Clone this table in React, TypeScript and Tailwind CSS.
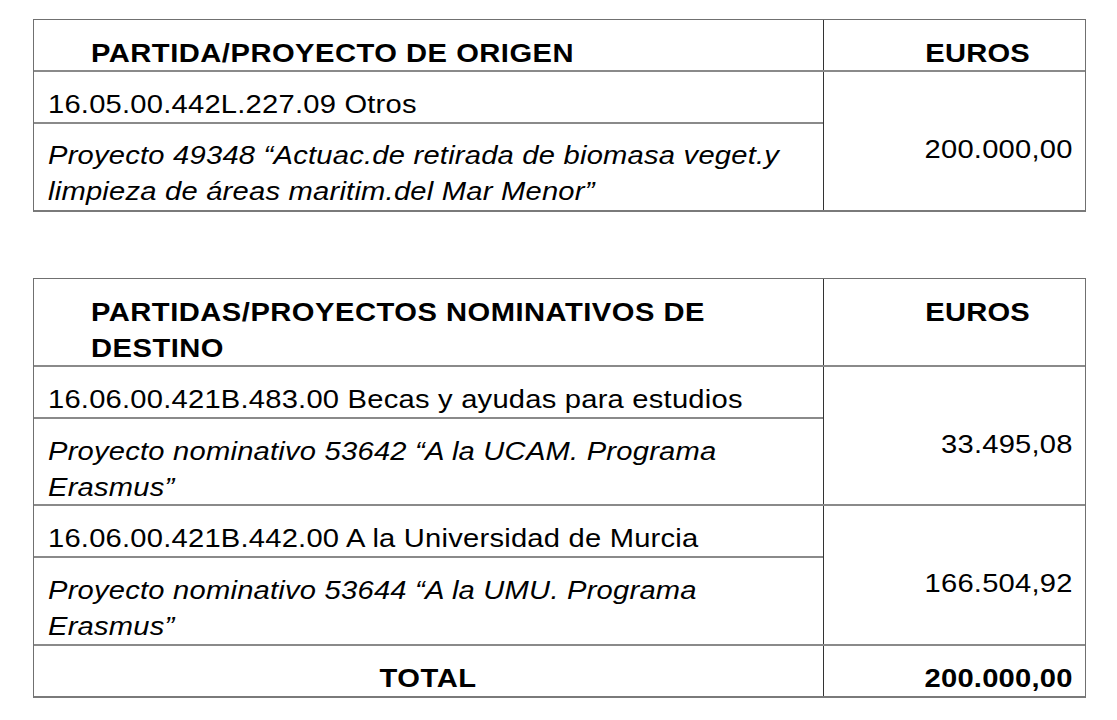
import React from "react";

const H = "border-b-2 border-[#8a8a8a]";

function L({ children }: { children: React.ReactNode }) {
  return <span className="inline-block origin-left scale-x-110">{children}</span>;
}
function R({ children }: { children: React.ReactNode }) {
  return <span className="inline-block origin-right scale-x-110">{children}</span>;
}
function C({ children }: { children: React.ReactNode }) {
  return <span className="inline-block origin-center scale-x-110">{children}</span>;
}

function Table1() {
  return (
    <div className="w-[1053px] border-x border-t border-[#707070] border-b-2 border-b-[#7a7a7a]">
      <div className={`flex h-[52px] ${H}`}>
        <div className="w-[790px] border-r border-r-[#333] pl-[57px] pt-[15px] font-bold tracking-[0.45px]">
          <L>PARTIDA/PROYECTO DE ORIGEN</L>
        </div>
        <div className="flex-1 pl-[46px] pt-[15px] text-center font-bold">
          <C>EUROS</C>
        </div>
      </div>
      <div className="flex">
        <div className="w-[790px] border-r border-r-[#333]">
          <div className={`h-[52px] ${H} pl-[14px] pt-[14px]`}>
            <L>16.05.00.442L.227.09 Otros</L>
          </div>
          <div className="h-[86px] pl-[14px] pt-[13px] italic">
            <L>
              Proyecto 49348 “Actuac.de retirada de biomasa veget.y
              <br />
              limpieza de áreas maritim.del Mar Menor”
            </L>
          </div>
        </div>
        <div className="flex flex-1 items-center justify-end pr-[12px] pt-[16px]">
          <R>200.000,00</R>
        </div>
      </div>
    </div>
  );
}

function Group({
  code,
  proj,
  amount,
  bodyH,
}: {
  code: string;
  proj: string;
  amount: string;
  bodyH: string;
}) {
  return (
    <div className={`flex ${H}`}>
      <div className="w-[790px] border-r border-r-[#333]">
        <div className={`h-[52px] ${H} pl-[14px] pt-[14px]`}>
          <L>{code}</L>
        </div>
        <div className={`${bodyH} pl-[14px] pt-[14px] italic`}>
          <L>
            {proj}
            <br />
            Erasmus”
          </L>
        </div>
      </div>
      <div className="flex flex-1 items-center justify-end pr-[12px] pt-[16px]">
        <R>{amount}</R>
      </div>
    </div>
  );
}

function Table2() {
  return (
    <div className="w-[1053px] border-x border-t border-[#707070] border-b-2 border-b-[#7a7a7a]">
      <div className={`flex h-[88px] ${H}`}>
        <div className="w-[790px] border-r border-r-[#333] pl-[57px] pt-[15px] font-bold tracking-[0.45px]">
          <L>
            PARTIDAS/PROYECTOS NOMINATIVOS DE
            <br />
            DESTINO
          </L>
        </div>
        <div className="flex-1 pl-[46px] pt-[15px] text-center font-bold">
          <C>EUROS</C>
        </div>
      </div>
      <Group
        code="16.06.00.421B.483.00 Becas y ayudas para estudios"
        proj="Proyecto nominativo 53642 “A la UCAM. Programa"
        amount="33.495,08"
        bodyH="h-[85px]"
      />
      <Group
        code="16.06.00.421B.442.00 A la Universidad de Murcia"
        proj="Proyecto nominativo 53644 “A la UMU. Programa"
        amount="166.504,92"
        bodyH="h-[86px]"
      />
      <div className="flex h-[50px]">
        <div className="w-[790px] border-r border-r-[#333] pt-[14px] text-center font-bold tracking-[0.45px]">
          <C>TOTAL</C>
        </div>
        <div className="flex flex-1 justify-end pr-[12px] pt-[14px] font-bold">
          <R>200.000,00</R>
        </div>
      </div>
    </div>
  );
}

export default function App() {
  return (
    <div className="min-h-[720px] w-[1117px] bg-white pl-[33px] pt-[19px] font-['Liberation_Sans',Arial,sans-serif] text-[26.5px] leading-[36px] tracking-[0.2px] text-black">
      <Table1 />
      <div className="h-[66px]" />
      <Table2 />
    </div>
  );
}
